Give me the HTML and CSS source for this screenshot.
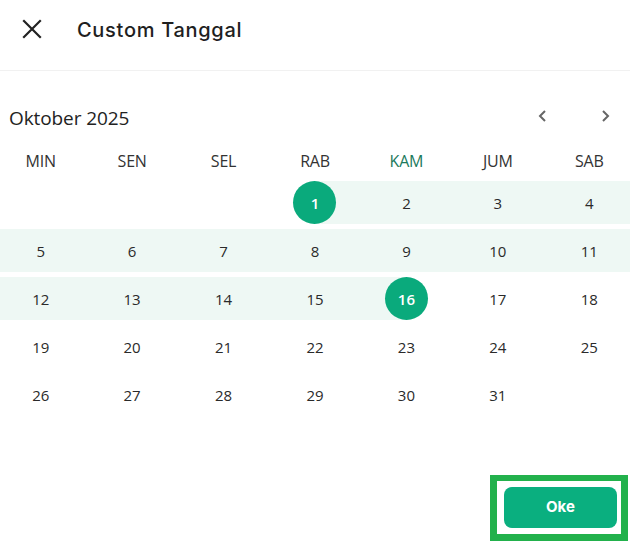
FILE: index.html
```html
<!DOCTYPE html>
<html>
<head>
<meta charset="utf-8">
<link rel="stylesheet" href="styles.css">
</head>
<body>
<div class="page">
  <header class="topbar">
    <svg class="close" width="20" height="20" viewBox="0 0 20 20"><path d="M2 2 L18 18 M18 2 L2 18" stroke="#222" stroke-width="2.2" stroke-linecap="square"/></svg>
    <h1 class="title">Custom Tanggal</h1>
  </header>
  <section class="calendar">
    <div class="month-row">
      <span class="month">Oktober 2025</span>
      <div class="navs">
        <svg width="12" height="14" viewBox="0 0 12 14"><path d="M8 2 L3 7 L8 12" fill="none" stroke="#666" stroke-width="2"/></svg>
        <svg width="12" height="14" viewBox="0 0 12 14"><path d="M4 2 L9 7 L4 12" fill="none" stroke="#666" stroke-width="2"/></svg>
      </div>
    </div>
    <div class="grid weekdays">
      <span>MIN</span><span>SEN</span><span>SEL</span><span>RAB</span><span class="today">KAM</span><span>JUM</span><span>SAB</span>
    </div>
    <div class="grid days">
      <span></span><span></span><span></span>
      <span class="range-start"><b class="sel">1</b></span><span class="in">2</span><span class="in">3</span><span class="in">4</span>
      <span class="in">5</span><span class="in">6</span><span class="in">7</span><span class="in">8</span><span class="in">9</span><span class="in">10</span><span class="in">11</span>
      <span class="in">12</span><span class="in">13</span><span class="in">14</span><span class="in">15</span><span class="range-end"><b class="sel">16</b></span><span>17</span><span>18</span>
      <span>19</span><span>20</span><span>21</span><span>22</span><span>23</span><span>24</span><span>25</span>
      <span>26</span><span>27</span><span>28</span><span>29</span><span>30</span><span>31</span><span></span>
    </div>
  </section>
  <footer class="footer">
    <div class="focus-box">
      <button class="ok">Oke</button>
    </div>
  </footer>
</div>
</body>
</html>
```

FILE: styles.css
```css
html, body {
  margin: 0;
  padding: 0;
  background: #fff;
  overflow: hidden;
}
.page {
  width: 630px;
  height: 542px;
  display: flex;
  flex-direction: column;
  font-family: "Open Sans", "Noto Sans", sans-serif;
  color: #222;
}
.topbar {
  height: 71px;
  box-sizing: border-box;
  border-bottom: 1px solid #f1f1f1;
  display: flex;
  align-items: center;
  padding-left: 22px;
  padding-bottom: 13px;
}
.close {
  display: block;
}
.title {
  margin: 0 0 0 35px;
  padding-top: 2px;
  font-family: "Inter", sans-serif;
  font-size: 20px;
  font-weight: 500;
  letter-spacing: 0.7px;
  color: #1f1f1f;
}
.calendar {
  padding-top: 33px;
}
.month-row {
  display: flex;
  align-items: center;
  justify-content: space-between;
  height: 28px;
  padding-left: 9px;
  padding-right: 19px;
}
.month {
  font-size: 19px;
  color: #222;
  letter-spacing: -0.1px;
}
.navs {
  display: flex;
  gap: 50px;
  margin-top: -4px;
}
.grid {
  display: grid;
  grid-template-columns: repeat(7, 1fr);
  width: 640px;
  margin-left: -5px;
}
.weekdays {
  margin-top: 17px;
  height: 24px;
  align-items: center;
}
.weekdays span {
  text-align: center;
  font-size: 16px;
  color: #333;
  letter-spacing: -0.2px;
}
.weekdays .today {
  color: #1c7a5c;
}
.days {
  margin-top: 8px;
  row-gap: 5px;
  grid-auto-rows: 43px;
}
.days span {
  display: flex;
  align-items: center;
  justify-content: center;
  font-size: 15px;
  color: #2a2a2a;
}
.days .in {
  background: #eef8f4;
}
.days .range-start {
  background: linear-gradient(to right, transparent 50%, #eef8f4 50%);
}
.days .range-end {
  background: linear-gradient(to right, #eef8f4 50%, transparent 50%);
}
.sel {
  width: 43px;
  height: 43px;
  border-radius: 50%;
  background: #0aaa7c;
  color: #fff;
  font-weight: 600;
  display: flex;
  align-items: center;
  justify-content: center;
  font-size: 15px;
}
.footer {
  margin-top: auto;
  display: flex;
  justify-content: flex-end;
  padding-right: 2px;
  padding-bottom: 1px;
}
.focus-box {
  border: 7px solid #22b14c;
  border-top-width: 6px;
  padding: 6px 4px 6px 7px;
  width: 113px;
  background: #fff;
}
.ok {
  display: block;
  width: 113px;
  height: 41px;
  border: none;
  border-radius: 8px;
  background: #0aaf7f;
  color: #fff;
  font-family: "Inter", sans-serif;
  font-weight: 700;
  font-size: 15px;
  padding: 0 0 2px;
}
```
